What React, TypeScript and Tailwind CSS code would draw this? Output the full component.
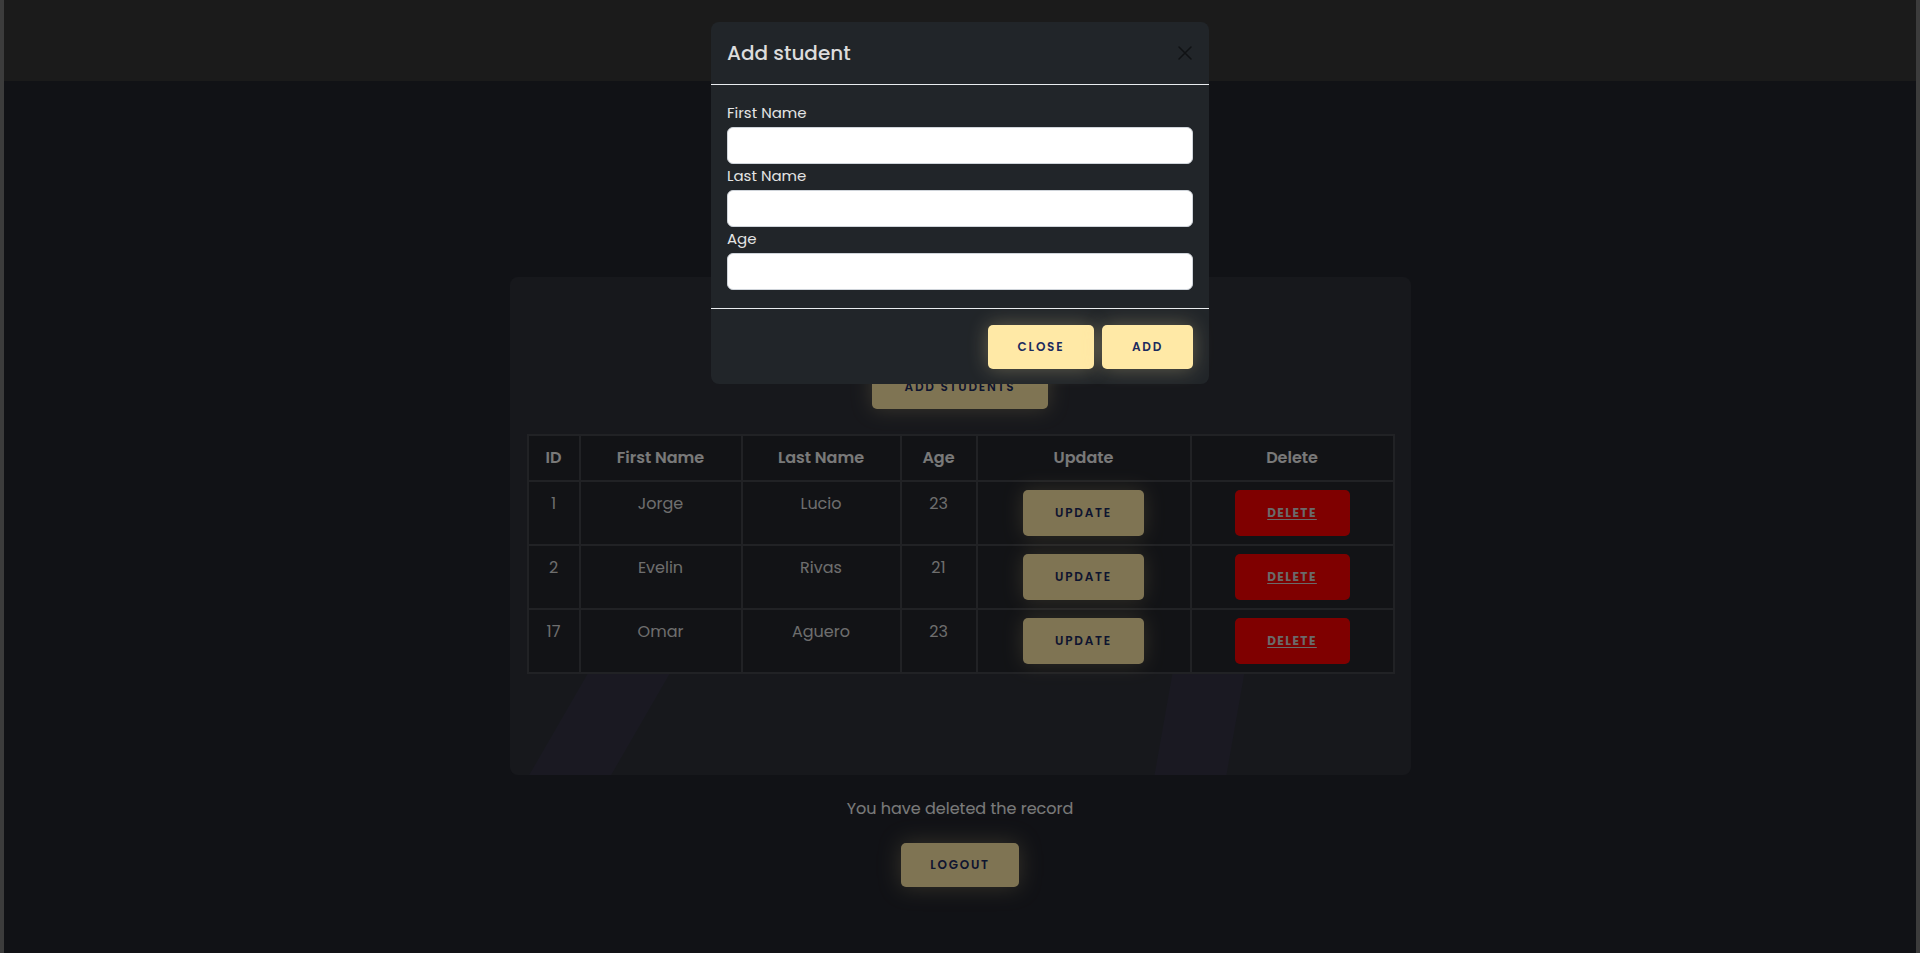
import { useState } from 'react'

const students = [
  { id: 1, firstName: 'Jorge', lastName: 'Lucio', age: 23 },
  { id: 2, firstName: 'Evelin', lastName: 'Rivas', age: 21 },
  { id: 17, firstName: 'Omar', lastName: 'Aguero', age: 23 },
]

const font = { fontFamily: '"Poppins", "Noto Sans", "Open Sans", sans-serif' }

function Field({ label }: { label: string }) {
  return (
    <div>
      <label className="block text-[15px] leading-6 text-[#e4e4e4] mb-[2px]">{label}</label>
      <input
        type="text"
        className="block w-full h-[37px] rounded-[6px] bg-white border border-[#cfd4da] px-3 text-[15px] text-[#212529] outline-none"
      />
    </div>
  )
}

export default function App() {
  const [open] = useState(true)

  return (
    <div className="h-screen w-full bg-white overflow-hidden" style={font}>
      <div className="relative h-[953px] border-x-4 border-[#3c3c3c] bg-[#22242c] flex flex-col overflow-hidden">
        {/* Navbar */}
        <nav className="h-[81px] shrink-0 bg-[#363636]" />

        {/* Main */}
        <main className="flex flex-col items-center">
          <section className="relative mt-[196px] w-[901px] h-[498px] rounded-lg bg-[#2e3038] overflow-hidden px-[17px] pt-[88px]">
            {/* decorative streaks */}
            <div className="absolute left-[70px] top-[300px] w-[82px] h-[220px] -skew-x-[30deg] bg-[#3a3550]/50" />
            <div className="absolute left-[660px] top-[300px] w-[72px] h-[220px] -skew-x-[10deg] bg-[#3a3550]/50" />

            <div className="relative flex justify-center">
              <button className="h-[44px] w-[176px] rounded-[5px] bg-[#ffe9a6] text-[#1b2a5e] text-[12px] font-semibold tracking-[0.15em] shadow-[0_0_20px_rgba(255,233,166,0.35)]">
                ADD STUDENTS
              </button>
            </div>

            <table className="relative mt-[25px] w-[866px] table-fixed border-collapse text-center bg-[#24262c]">
              <colgroup>
                <col className="w-[52px]" />
                <col className="w-[162px]" />
                <col className="w-[159px]" />
                <col className="w-[76px]" />
                <col className="w-[214px]" />
                <col className="w-[203px]" />
              </colgroup>
              <thead>
                <tr className="text-[16px] text-[#f2f2f2]">
                  {['ID', 'First Name', 'Last Name', 'Age', 'Update', 'Delete'].map((h) => (
                    <th key={h} className="border-2 border-[#43454b] py-[10px] leading-6 font-semibold">
                      {h}
                    </th>
                  ))}
                </tr>
              </thead>
              <tbody className="text-[16px] text-[#dcdcdc]">
                {students.map((s) => (
                  <tr key={s.id}>
                    <td className="border-2 border-[#43454b] align-top pt-[10px] leading-6">{s.id}</td>
                    <td className="border-2 border-[#43454b] align-top pt-[10px] leading-6">{s.firstName}</td>
                    <td className="border-2 border-[#43454b] align-top pt-[10px] leading-6">{s.lastName}</td>
                    <td className="border-2 border-[#43454b] align-top pt-[10px] leading-6">{s.age}</td>
                    <td className="border-2 border-[#43454b] pt-[8px] pb-[8px]">
                      <button className="h-[46px] w-[121px] rounded-[5px] bg-[#ffe9a6] text-[#1b2a5e] text-[12px] font-semibold tracking-[0.15em] shadow-[0_0_20px_rgba(255,233,166,0.3)]">
                        UPDATE
                      </button>
                    </td>
                    <td className="border-2 border-[#43454b] pt-[8px] pb-[8px]">
                      <button className="h-[46px] w-[115px] rounded-[5px] bg-[#ff0000] text-[#d4d4d4] text-[12px] font-bold tracking-[0.12em] underline underline-offset-2">
                        DELETE
                      </button>
                    </td>
                  </tr>
                ))}
              </tbody>
            </table>
          </section>

          <p className="mt-[22px] text-[16px] leading-6 text-[#f4f4f4]">You have deleted the record</p>

          <button className="mt-[22px] h-[44px] w-[118px] rounded-[5px] bg-[#ffe9a6] text-[#1b2a5e] text-[12px] font-semibold tracking-[0.15em] shadow-[0_0_22px_rgba(255,233,166,0.35)]">
            LOGOUT
          </button>
        </main>

        {/* Modal backdrop */}
        {open && <div className="absolute inset-0 bg-black/50" />}

        {/* Modal */}
        {open && (
          <div className="absolute left-[707px] top-[22px] w-[498px] rounded-lg bg-[#212529] text-[#dee2e6]">
            <div className="flex items-center justify-between px-4 py-4 border-b border-[#e9ecef]">
              <h5 className="text-[20px] leading-[30px] font-medium text-[#dcdcdc]">Add student</h5>
              <button className="w-4 h-4 opacity-50">
                <svg viewBox="0 0 16 16" className="w-4 h-4" fill="none" stroke="#000" strokeWidth="1.5" strokeLinecap="round">
                  <path d="M2 2l12 12M14 2L2 14" />
                </svg>
              </button>
            </div>
            <div className="px-4 pt-4 pb-[18px] flex flex-col">
              <Field label="First Name" />
              <Field label="Last Name" />
              <Field label="Age" />
            </div>
            <div className="flex justify-end gap-2 px-4 pt-4 pb-[15px] border-t border-[#e9ecef]">
              <button className="h-[44px] w-[106px] rounded-[5px] bg-[#ffe9a6] text-[#1b2a5e] text-[12px] font-semibold tracking-[0.15em] shadow-[0_0_20px_rgba(255,233,166,0.3)]">
                CLOSE
              </button>
              <button className="h-[44px] w-[91px] rounded-[5px] bg-[#ffe9a6] text-[#1b2a5e] text-[12px] font-semibold tracking-[0.15em] shadow-[0_0_20px_rgba(255,233,166,0.3)]">
                ADD
              </button>
            </div>
          </div>
        )}
      </div>
    </div>
  )
}
